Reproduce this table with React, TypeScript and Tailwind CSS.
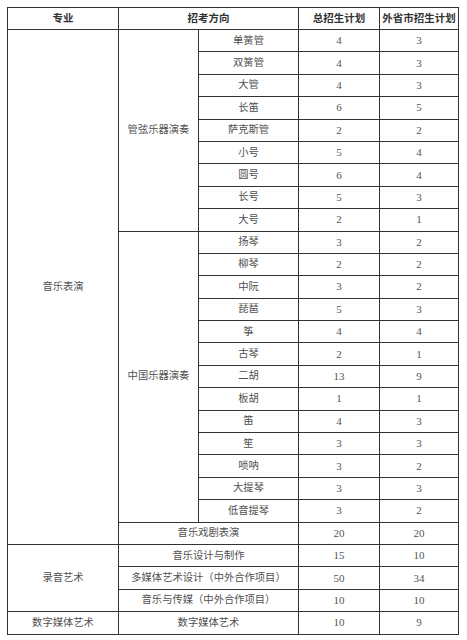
const wind = [
  ["单簧管", "4", "3"],
  ["双簧管", "4", "3"],
  ["大管", "4", "3"],
  ["长笛", "6", "5"],
  ["萨克斯管", "2", "2"],
  ["小号", "5", "4"],
  ["圆号", "6", "4"],
  ["长号", "5", "3"],
  ["大号", "2", "1"],
];

const chinese = [
  ["扬琴", "3", "2"],
  ["柳琴", "2", "2"],
  ["中阮", "3", "2"],
  ["琵琶", "5", "3"],
  ["筝", "4", "4"],
  ["古琴", "2", "1"],
  ["二胡", "13", "9"],
  ["板胡", "1", "1"],
  ["笛", "4", "3"],
  ["笙", "3", "3"],
  ["唢呐", "3", "2"],
  ["大提琴", "3", "3"],
  ["低音提琴", "3", "2"],
];

const recording = [
  ["音乐设计与制作", "15", "10"],
  ["多媒体艺术设计（中外合作项目）", "50", "34"],
  ["音乐与传媒（中外合作项目）", "10", "10"],
];

const td = "border border-[#333] text-center align-middle p-0 h-[22.4px] leading-none whitespace-nowrap";
const num = `${td} text-[11px] text-[#555]`;
const th =
  "border border-[#333] text-center align-middle p-0 h-[22px] leading-none whitespace-nowrap font-bold text-[#333] text-[10.5px] font-['Noto_Sans_CJK_SC',sans-serif]";

export default function App() {
  return (
    <div className="bg-white w-[467px] h-[640px] p-[7px] text-[10.3px] text-[#505050] font-['Liberation_Serif','Noto_Sans_CJK_SC',serif]">
      <table className="w-[451px] table-fixed border-collapse">
        <colgroup>
          <col className="w-[111px]" />
          <col className="w-[80px]" />
          <col className="w-[100px]" />
          <col className="w-[81px]" />
          <col className="w-[79px]" />
        </colgroup>
        <thead>
          <tr>
            <th className={th}>专业</th>
            <th colSpan={2} className={th}>招考方向</th>
            <th className={th}>总招生计划</th>
            <th className={th}>外省市招生计划</th>
          </tr>
        </thead>
        <tbody>
          {wind.map((r, i) => (
            <tr key={r[0]}>
              {i === 0 && (
                <td rowSpan={23} className={td}>音乐表演</td>
              )}
              {i === 0 && (
                <td rowSpan={9} className={td}>管弦乐器演奏</td>
              )}
              <td className={td}>{r[0]}</td>
              <td className={num}>{r[1]}</td>
              <td className={num}>{r[2]}</td>
            </tr>
          ))}
          {chinese.map((r, i) => (
            <tr key={r[0]}>
              {i === 0 && (
                <td rowSpan={13} className={td}>中国乐器演奏</td>
              )}
              <td className={td}>{r[0]}</td>
              <td className={num}>{r[1]}</td>
              <td className={num}>{r[2]}</td>
            </tr>
          ))}
          <tr>
            <td colSpan={2} className={td}>音乐戏剧表演</td>
            <td className={num}>20</td>
            <td className={num}>20</td>
          </tr>
          {recording.map((r, i) => (
            <tr key={r[0]}>
              {i === 0 && (
                <td rowSpan={3} className={td}>录音艺术</td>
              )}
              <td colSpan={2} className={td}>{r[0]}</td>
              <td className={num}>{r[1]}</td>
              <td className={num}>{r[2]}</td>
            </tr>
          ))}
          <tr>
            <td className={td}>数字媒体艺术</td>
            <td colSpan={2} className={td}>数字媒体艺术</td>
            <td className={num}>10</td>
            <td className={num}>9</td>
          </tr>
        </tbody>
      </table>
    </div>
  );
}
